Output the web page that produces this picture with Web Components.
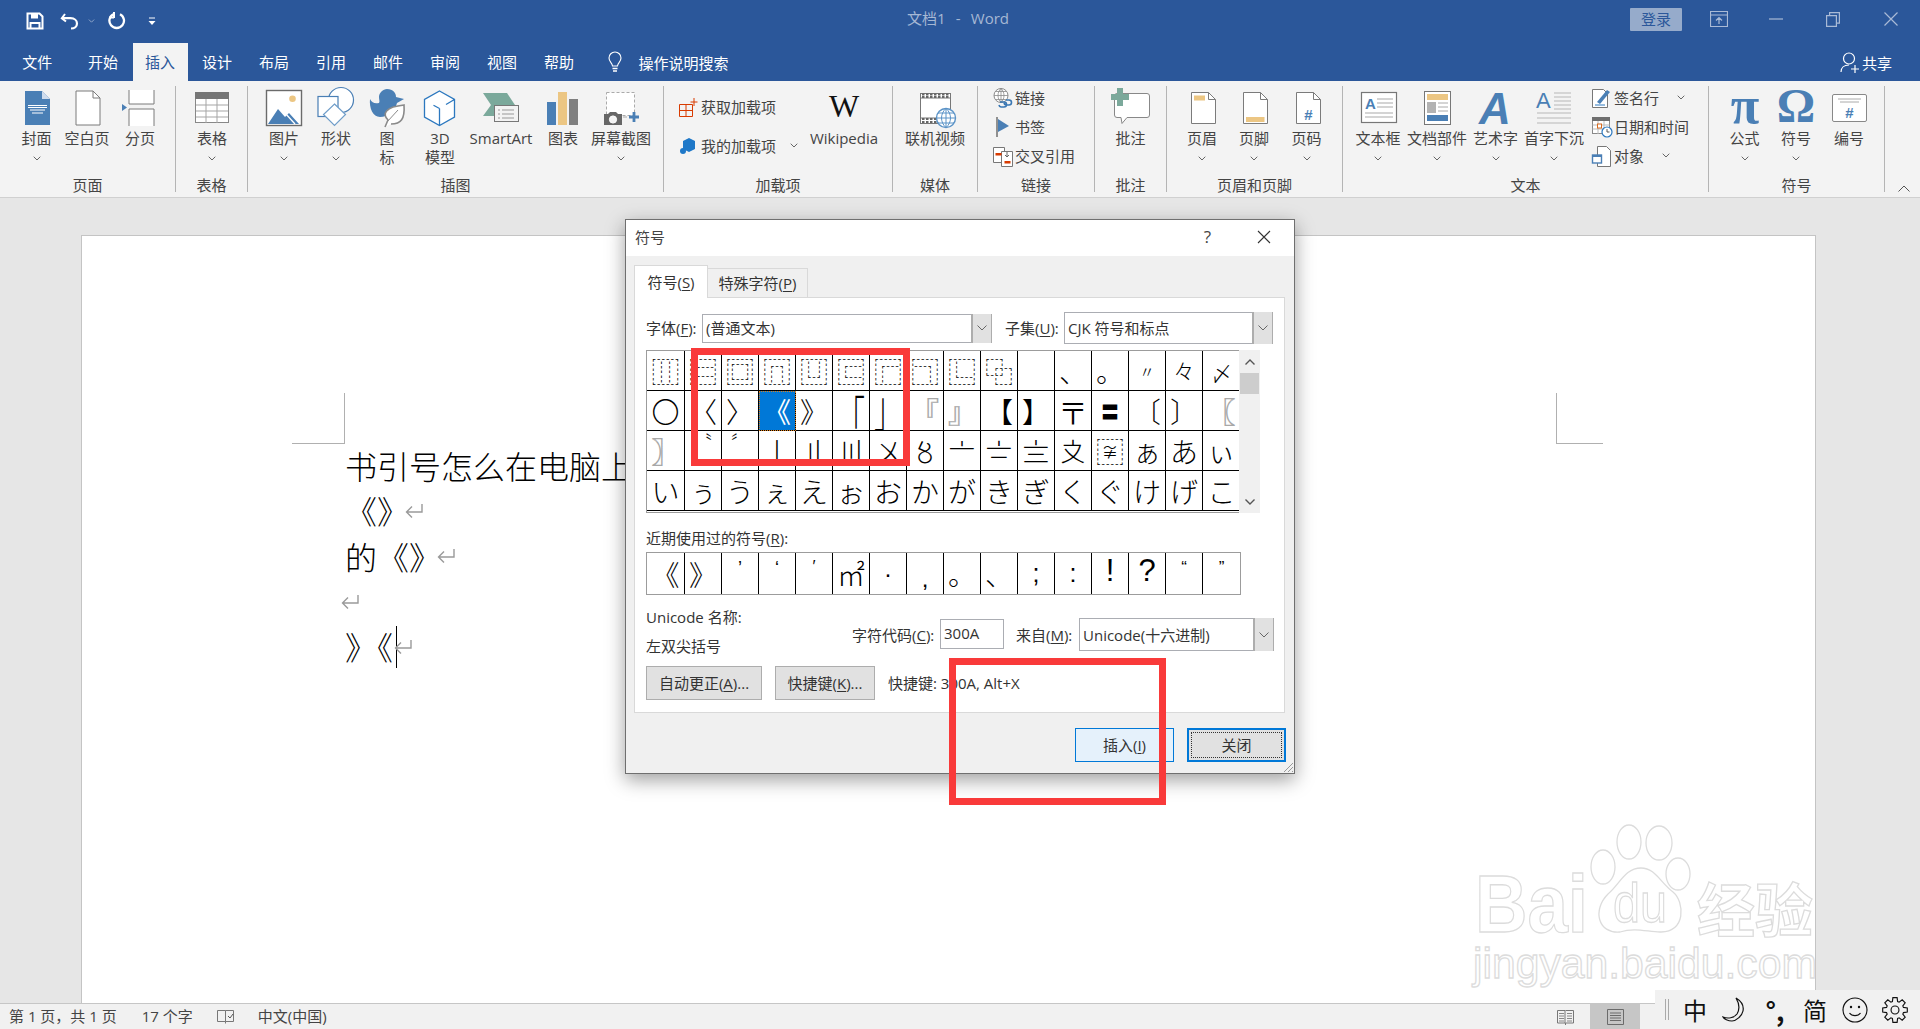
<!DOCTYPE html>
<html lang="zh"><head><meta charset="utf-8"><title>文档1 - Word</title>
<style>
html,body{margin:0;padding:0;height:100%;overflow:hidden;background:#e6e6e6}
body{font-family:"Open Sans","Noto Sans CJK SC",sans-serif;font-size:15px;color:#444}
</style></head>
<body>
<word-window>
  <title-bar></title-bar>
  <tab-bar>
    <tab-item style="width:74.500px">文件</tab-item><tab-item>开始</tab-item><tab-item active>插入</tab-item><tab-item>设计</tab-item><tab-item>布局</tab-item><tab-item>引用</tab-item><tab-item>邮件</tab-item><tab-item>审阅</tab-item><tab-item>视图</tab-item><tab-item>帮助</tab-item>
  </tab-bar>
  <ribbon-bar>
    <rb-group w="176" pad="11" label="页面">
      <rb-btn w="51" icon="cover" arrow>封面</rb-btn><rb-btn w="50" icon="blank">空白页</rb-btn><rb-btn w="56" icon="pbreak">分页</rb-btn>
    </rb-group>
    <rb-group w="72" pad="6" label="表格"><rb-btn w="60" icon="table" arrow>表格</rb-btn></rb-group>
    <rb-group w="416" pad="12" label="插图">
      <rb-btn w="48" icon="pic" arrow>图片</rb-btn><rb-btn w="56" icon="shape" arrow>形状</rb-btn><rb-btn w="46" icon="duck">图<br>标</rb-btn><rb-btn w="60" icon="cube">3D<br>模型</rb-btn><rb-btn w="62" icon="smart">SmartArt</rb-btn><rb-btn w="62" icon="chart">图表</rb-btn><rb-btn w="54" icon="shot" arrow>屏幕截图</rb-btn>
    </rb-group>
    <rb-group w="229" pad="15" label="加载项">
      <rb-col w="121" gap="10" top="7"><rb-small icon="getadd">获取加载项</rb-small><rb-small icon="myadd" arrow="14">我的加载项</rb-small></rb-col>
      <rb-btn w="88" icon="wiki">Wikipedia</rb-btn>
    </rb-group>
    <rb-group w="85" pad="0" label="媒体"><rb-btn w="84" icon="video">联机视频</rb-btn></rb-group>
    <rb-group w="117" pad="15" label="链接">
      <rb-col w="100" gap="0" top="-2"><rb-small icon="link">链接</rb-small><rb-small icon="mark">书签</rb-small><rb-small icon="xref">交叉引用</rb-small></rb-col>
    </rb-group>
    <rb-group w="72" pad="0" label="批注"><rb-btn w="71" icon="comment">批注</rb-btn></rb-group>
    <rb-group w="176" pad="9" label="页眉和页脚">
      <rb-btn w="52" icon="header" arrow>页眉</rb-btn><rb-btn w="52" icon="footer" arrow>页脚</rb-btn><rb-btn w="53" icon="pageno" arrow>页码</rb-btn>
    </rb-group>
    <rb-group w="366" pad="6" label="文本">
      <rb-btn w="58" icon="textbox" arrow>文本框</rb-btn><rb-btn w="60" icon="parts" arrow>文档部件</rb-btn><rb-btn w="57" icon="wordart" arrow>艺术字</rb-btn><rb-btn w="60" icon="dropcap" arrow>首字下沉</rb-btn>
      <rb-col w="116" gap="0" top="-2" left="8"><rb-small icon="sign" arrow="18">签名行</rb-small><rb-small icon="date">日期和时间</rb-small><rb-small icon="obj" arrow="18">对象</rb-small></rb-col>
    </rb-group>
    <rb-group w="176" pad="9" label="符号">
      <rb-btn w="53" icon="pi" arrow>公式</rb-btn><rb-btn w="50" icon="omega" arrow>符号</rb-btn><rb-btn w="56" icon="numb">编号</rb-btn>
    </rb-group>
    <rb-collapse></rb-collapse>
  </ribbon-bar>
  <doc-area>
    <doc-line>书引号怎么在电脑上</doc-line>
    <doc-line>《》<para-mark></para-mark></doc-line>
    <doc-line>的《》<para-mark></para-mark></doc-line>
    <doc-line><para-mark></para-mark></doc-line>
    <doc-line>》<tight-glyph>《</tight-glyph><text-caret></text-caret><para-mark></para-mark></doc-line>
  </doc-area>
  <status-bar></status-bar>
  <baidu-mark></baidu-mark>
  <symbol-dialog></symbol-dialog>
  <red-box style="left:691px;top:348px;width:205px;height:104px"></red-box>
  <red-box style="left:949px;top:658px;width:203px;height:133px"></red-box>
  <ime-bar></ime-bar>
</word-window>

<script>
const MUTE='#a9bad6';
const A='#4a7fb5',Y='#ecc683',G='#7f7f7f',S='#7b7b7b';
const ICONS={
cover:`<path d="M10 5h17l8 8v26H10z" fill="${A}"/><path d="M27 5l8 8h-8z" fill="#cfdced"/><path d="M13 19.5h19M13 21.5h19M15 24h15M17 27h11" stroke="#fff" stroke-width="1"/>`,
blank:`<path d="M11 5h17l7 7v27H11z" fill="#fff" stroke="${S}"/><path d="M28 5v7h7" fill="none" stroke="${S}"/>`,
pbreak:`<path d="M11 4v14h25V4M11 40V23h25v17" fill="#fff" stroke="${S}"/><path d="M4 18l5 3.500-5 3.500z" fill="${A}"/>`,
table:`<rect x="5.500" y="6.500" width="33" height="30" fill="#fff" stroke="#888"/><rect x="5" y="6" width="34" height="7" fill="#767676"/><path d="M6 19h32M6 25h32M6 31h32M16 13v24M27 13v24" stroke="#a5a5a5"/>`,
pic:`<rect x="4.500" y="4.500" width="35" height="35" fill="#fff" stroke="#6b6b6b" stroke-width="1.400"/><circle cx="30.500" cy="12.700" r="3.300" fill="${Y}"/><path d="M6 38l10-15 7 8 4-4 10 11z" fill="${A}"/><path d="M23 27l10 11" stroke="#fff" stroke-width="1.300"/>`,
shape:`<circle cx="27" cy="14" r="12.500" fill="#fff" stroke="${A}" stroke-width="1.200"/><rect x="4" y="10.500" width="20" height="20" fill="#fff" stroke="${A}" stroke-width="1.200"/><path d="M20.500 18l11 10.500-11 11-11-11z" fill="#fff" stroke="#6f9dc9" stroke-width="1.200"/>`,
duck:`<path d="M22 3c6 0 9 4 9 8l8 2-7 4c-2 8-9 14-17 14C8 31 4 22 5 13c2 4 5 5 9 4 1-2 0-3 0-6 0-4 4-8 8-8z" fill="${A}"/><path d="M20 41l3-7c-6-6-3-13 16-15 1 14-3 19-13 19" fill="#fff" stroke="#8a8a8a" stroke-width="1.600"/><path d="M22 36l11-12" stroke="#8a8a8a"/>`,
cube:`<path d="M21.500 5l15 8.500v17.500l-15 8.500-15-8.500V13.500zM21.500 22.500V39M21.500 22.500l-6-3.300M36 13.800l-8 4.700" fill="#fff" stroke="#2c78bf" stroke-width="1.300"/>`,
smart:`<path d="M4 7h24l8 12-8 11H4l8-11z" fill="#7ba99b"/><rect x="15.500" y="19.500" width="24" height="16" fill="#f3f3f3" stroke="#777"/><path d="M19 24h2M23 24h12M19 28h2M23 28h12M19 32h2M23 32h12" stroke="#999"/>`,
chart:`<rect x="6" y="16" width="9" height="23" fill="${A}"/><rect x="17" y="6" width="9" height="33" fill="${Y}"/><rect x="28" y="13" width="9" height="26" fill="${G}"/>`,
shot:`<rect x="7.500" y="6.500" width="28" height="23" fill="#fff" stroke="#aaa" stroke-dasharray="3 2"/><path d="M5 28h4l2-2h6l2 2h4v11H5z" fill="#666"/><circle cx="14" cy="33.500" r="3.600" fill="#f3f3f3" stroke="#fff"/><path d="M35 26v10M30 31h10" stroke="${A}" stroke-width="2.800"/><path d="M24 31h4" stroke="#aaa"/>`,
wiki:`<text x="22" y="31" text-anchor="middle" font-family="Liberation Serif" font-size="32" fill="#111">W</text>`,
video:`<rect x="7.500" y="7.500" width="30" height="30" fill="#fff" stroke="#777"/><path d="M8 12h29M8 32h29" stroke="#777"/><path d="M9 8.500h28M9 11h28M9 33h28M9 36h28" stroke="#666" stroke-width="2.200" stroke-dasharray="2.500 1.500"/><circle cx="33" cy="32" r="9.500" fill="#fff" stroke="#5b93c7" stroke-width="1.400"/><path d="M23.500 32h19M25 27h16M25 37h16M33 22.500v19M33 22.500c-6 5-6 14 0 19M33 22.500c6 5 6 14 0 19" fill="none" stroke="#5b93c7"/>`,
comment:`<path d="M8 7.500h30a2.500 2.500 0 0 1 2.500 2.500v19a2.500 2.500 0 0 1-2.500 2.500H18l-5 6-1-6H8A2.500 2.500 0 0 1 5.500 29V10A2.500 2.500 0 0 1 8 7.500z" fill="#fff" stroke="#888"/><path d="M2 8h6V2h6v6h6v6h-6v6H8v-6H2z" fill="#7ba99b"/>`,
header:`<path d="M11.500 6.500h17l7 7v24h-24z" fill="#fff" stroke="${S}"/><path d="M28.500 6.500v7h7" fill="none" stroke="${S}"/><rect x="14" y="9.500" width="11" height="5" fill="${Y}"/>`,
footer:`<path d="M11.500 6.500h17l7 7v24h-24z" fill="#fff" stroke="${S}"/><path d="M28.500 6.500v7h7" fill="none" stroke="${S}"/><rect x="14" y="31" width="18.500" height="5" fill="${Y}"/>`,
pageno:`<path d="M11.500 6.500h17l7 7v24h-24z" fill="#fff" stroke="${S}"/><path d="M28.500 6.500v7h7" fill="none" stroke="${S}"/><text x="23.500" y="34" text-anchor="middle" font-family="Liberation Sans" font-size="15" font-weight="700" fill="${A}">#</text>`,
textbox:`<rect x="5.500" y="6.500" width="35" height="30" fill="#fff" stroke="#777" stroke-width="1.200"/><text x="9" y="23" font-family="Liberation Sans" font-size="15" font-weight="700" fill="${A}">A</text><path d="M21 13h16M21 17h16M21 21h16M9 27h28M9 31h28" stroke="#aaa" stroke-width="1.200"/>`,
parts:`<rect x="9.500" y="5.500" width="26" height="33" fill="#fff" stroke="#777"/><rect x="12" y="8" width="21" height="6" fill="${Y}"/><rect x="12" y="16" width="9" height="11" fill="#b3b3b3"/><path d="M23 17h10M23 21h10M23 25h10" stroke="#aaa"/><rect x="12" y="29" width="21" height="6" fill="${A}"/>`,
wordart:`<text x="21" y="38" text-anchor="middle" font-family="Liberation Sans" font-style="italic" font-weight="700" font-size="44" fill="${A}">A</text>`,
dropcap:`<text x="4" y="22" font-family="Liberation Sans" font-size="22" font-weight="400" fill="${A}">A</text><path d="M22 7h17M22 11h17M22 15h17M22 19h17M22 23h17M5 27h34M5 32h34M5 37h34" stroke="#b8b8b8" stroke-width="1.200"/>`,
pi:`<text x="22" y="37" text-anchor="middle" font-family="Liberation Serif" font-size="52" font-weight="700" fill="${A}">π</text>`,
omega:`<text x="22" y="36" text-anchor="middle" font-family="Liberation Serif" font-size="48" font-weight="700" fill="${A}">Ω</text>`,
numb:`<rect x="5.500" y="8.500" width="34" height="27" rx="1.500" fill="#fff" stroke="#888"/><path d="M11 13h23M13 16h19" stroke="#aaa"/><text x="22.500" y="32" text-anchor="middle" font-family="Liberation Sans" font-size="15" font-weight="700" fill="${A}">#</text>`,
getadd:`<path d="M.5 7.500h13v12H.5zM.5 13.500h13M7 7.500v12" fill="none" stroke="#d83b01"/><path d="M15 1v8M11.500 5h7" stroke="#d83b01"/>`,
myadd:`<path d="M10 2l6 3v8l-6 3-6-3V5z" fill="#1e78c8"/><circle cx="4" cy="15" r="3" fill="#1e78c8"/>`,
link:`<circle cx="8" cy="7.500" r="7" fill="#fff" stroke="#8a8a8a"/><path d="M1 7.500h14M8 .500v14M2.500 3.500h11M2.500 11.500h11M8 .500c-4 4-4 10 0 14M8 .500c4 4 4 10 0 14" fill="none" stroke="#8a8a8a" stroke-width=".8"/><path d="M7 14h4a2.500 2.500 0 0 1 0 5H8a2.500 2.500 0 0 1-2-2M13 12h3a2.500 2.500 0 0 1 0 5h-3a2.500 2.500 0 0 1-2-2" fill="none" stroke="#3b78b4" stroke-width="1.600"/>`,
mark:`<path d="M4 0v20" stroke="#777" stroke-width="1.600"/><path d="M5 2l11 7-11 6z" fill="${A}"/>`,
xref:`<path d="M.5 1.500h11v15H.5z" fill="#fff" stroke="#777"/><path d="M8.500 5.500h11v15h-11z" fill="#fff" stroke="#777"/><rect x="2.500" y="7" width="6" height="2.500" fill="#d83b01"/><rect x="11.500" y="15" width="6" height="2.500" fill="#d83b01"/><path d="M14 6v5M12 9l2 2 2-2" fill="none" stroke="#666"/>`,
sign:`<path d="M.5 1.500h11l4 4v14H.5z" fill="#fff" stroke="#777"/><path d="M3 17h10" stroke="#2c78bf"/><path d="M5 14L15 2l3 2-10 12z" fill="${A}"/>`,
date:`<rect x=".5" y=".5" width="17" height="16" fill="#fff" stroke="#888"/><rect x="0" y="0" width="18" height="4" fill="#6e6e6e"/><path d="M.5 8h17M.5 12h17M6 4v13M12 4v13" stroke="#bbb"/><rect x="5.500" y="7" width="4" height="4" fill="#fff" stroke="#d86a1e"/><circle cx="15" cy="15" r="5" fill="#fff" stroke="#2c78bf" stroke-width="1.200"/><path d="M15 12v3h2.500" fill="none" stroke="#555"/>`,
obj:`<path d="M5.500 .5h9l4 4v16h-13z" fill="#fff" stroke="#777"/><rect x=".5" y="9" width="9" height="8" fill="#fff" stroke="${A}" stroke-width="1.400"/><rect x=".5" y="9" width="9" height="2" fill="${A}"/>`
};
const svg44=n=>`<svg viewBox="0 0 44 44" width="44" height="44">${ICONS[n]||''}</svg>`;
const chev=(c='#666')=>`<svg viewBox="0 0 8 5" width="8" height="5"><path d="M.7 .7L4 4l3.300-3.300" fill="none" stroke="${c}" stroke-width="1"/></svg>`;
const PMARK=`<svg viewBox="0 0 18 16" width="18" height="16"><path d="M17 1v8H2M7 3.500L1.500 9 7 14.500" fill="none" stroke="#9a9a9a" stroke-width="1.400"/></svg>`;

function comp(name,css,render){
  customElements.define(name,class extends HTMLElement{
    connectedCallback(){
      if(this.shadowRoot)return;
      const r=this.attachShadow({mode:'open'});
      r.innerHTML=`<style>${css}</style>`+render(this);
    }
  });
}

comp('word-window',`:host{display:flex;flex-direction:column;position:relative;width:1920px;height:1029px;overflow:hidden}`,()=>`<slot></slot>`);

comp('title-bar',`:host{display:grid;grid-template-columns:1fr auto 1fr;align-items:center;height:41px;background:#2b579a;flex:none}
.q{display:flex;align-items:center;padding-left:26px;height:41px}
.t{color:#a6b8d4;font-size:15px;padding-bottom:7px;padding-right:4px;white-space:pre;word-spacing:1.200px}
.r{display:flex;align-items:center;justify-content:flex-end;height:41px;padding-bottom:3px;box-sizing:border-box}
.login{width:52px;height:23px;background:#96abcb;color:#2b579a;font-size:15px;line-height:23px;text-align:center;border-radius:1px;margin-right:28px}
.r svg{display:block}`,()=>`
<div class="q">
 <svg viewBox="0 0 18 18" width="18" height="18"><path d="M1.500 1.500h12l3 3v12h-15z" fill="none" stroke="#fff" stroke-width="2"/><path d="M5 1.500h7v5H5z" fill="#fff"/><path d="M4.500 16v-5h9v5" fill="none" stroke="#fff" stroke-width="2"/></svg>
 <svg style="margin-left:16px" viewBox="0 0 20 18" width="20" height="18"><path d="M5 2L1.800 6.200 6 9.500" fill="none" stroke="#fff" stroke-width="2"/><path d="M2.500 6.200h8c4 0 6.500 2.300 6.500 5.300s-2.500 5-6 5" fill="none" stroke="#fff" stroke-width="2.200"/></svg>
 <span style="margin-left:8px;display:flex">${chev('#a6b8d4').replace('width="8" height="5"','width="7" height="4"')}</span>
 <svg style="margin-left:13px" viewBox="0 0 18 19" width="18" height="19"><path d="M12 3.200a7.300 7.300 0 1 1-6.600 0" fill="none" stroke="#fff" stroke-width="2.300"/><path d="M6 1v6M6 6.500h-5" fill="none" stroke="#fff" stroke-width="2"/></svg>
 <svg style="margin-left:22px" viewBox="0 0 8 10" width="8" height="10"><path d="M1 2h6" stroke="#fff"/><path d="M.5 5h7L4 9z" fill="#fff"/></svg>
</div>
<div class="t">文档1  -  Word</div>
<div class="r">
 <div class="login">登录</div>
 <svg viewBox="0 0 18 16" width="18" height="16"><path d="M.5 .5h17v15H.5zM.5 4h17M9 13V7M6 9.500l3-3 3 3" fill="none" stroke="${MUTE}" stroke-width="1.200"/></svg>
 <svg style="margin-left:41px" viewBox="0 0 14 2" width="14" height="2"><path d="M0 1h14" stroke="${MUTE}" stroke-width="1.200"/></svg>
 <svg style="margin-left:43px" viewBox="0 0 14 15" width="14" height="15"><path d="M.6 3.600h9.800v10.800H.6zM3.600 3.500V.6h9.800v10.500h-3" fill="none" stroke="${MUTE}" stroke-width="1.200"/></svg>
 <svg style="margin-left:44px;margin-right:22px" viewBox="0 0 14 14" width="14" height="14"><path d="M.5 .5l13 13M13.500 .5l-13 13" stroke="${MUTE}" stroke-width="1.200"/></svg>
</div>`);

comp('tab-bar',`:host{display:flex;align-items:flex-end;height:40px;background:#2b579a;flex:none;color:#fff}
.s{display:flex;align-items:center;height:38px;margin-left:19px;font-size:15px;color:#fff}
.s svg{margin-right:16px}
.share{display:flex;align-items:center;height:38px;margin-left:auto;padding-right:28px;font-size:15px;gap:2px}`,()=>`
<slot></slot>
<div class="s"><svg viewBox="0 0 16 22" width="16" height="22"><path d="M5.500 15c0-3-3.500-4-3.500-8a6 6 0 0 1 12 0c0 4-3.500 5-3.500 8z" fill="none" stroke="#fff" stroke-width="1.100"/><path d="M5.500 17.500h5M6 20h4" stroke="#fff" stroke-width="1.300"/></svg>操作说明搜索</div>
<div class="share"><svg viewBox="0 0 20 22" width="20" height="22"><circle cx="9" cy="7.500" r="5.500" fill="none" stroke="#fff" stroke-width="1.200"/><path d="M1 21c0-4 3-7 8-7M11 18h8M15 14v8" fill="none" stroke="#fff" stroke-width="1.200"/></svg>共享</div>`);

comp('tab-item',`:host{display:block;width:57px;height:38px;line-height:38px;text-align:center;font-size:15px;color:#fff;box-sizing:border-box;flex:none}
:host([active]){background:#f3f3f3;color:#2b579a;width:55px;margin:0 1px}`,()=>`<slot></slot>`);

comp('ribbon-bar',`:host{display:flex;align-items:flex-start;height:117px;box-sizing:border-box;padding-top:5px;background:#f3f3f3;border-bottom:1px solid #d0d0d0;flex:none;position:relative}`,()=>`<slot></slot>`);

comp('rb-group',`:host{display:flex;flex-direction:column;height:106px;box-sizing:border-box;border-right:1px solid #b4b4b4;flex:none}
.c{display:flex;height:89px;align-items:flex-start}
.l{text-align:center;font-size:15px;line-height:20px;height:17px;color:#444}`,h=>{
  h.style.width=h.getAttribute('w')+'px';
  return `<div class="c" style="padding-left:${h.getAttribute('pad')}px"><slot></slot></div><div class="l">${h.getAttribute('label')}</div>`;
});

comp('rb-btn',`:host{display:flex;flex-direction:column;align-items:center;flex:none;font-size:15px;line-height:19px;color:#444;text-align:center;white-space:nowrap}
.i{height:43px;width:44px;flex:none}
svg{display:block;overflow:visible}
.a{height:16px;margin-top:2px;display:flex;align-items:center;justify-content:center}`,h=>{
  h.style.width=h.getAttribute('w')+'px';
  return `<div class="i">${svg44(h.getAttribute('icon'))}</div><div><slot></slot></div>${h.hasAttribute('arrow')?`<div class="a">${chev()}</div>`:''}`;
});

comp('rb-col',`:host{display:flex;flex-direction:column;flex:none}`,h=>{
  h.style.width=h.getAttribute('w')+'px';
  h.style.gap=h.getAttribute('gap')+'px';
  h.style.marginTop=h.getAttribute('top')+'px';
  if(h.getAttribute('left'))h.style.marginLeft=h.getAttribute('left')+'px';
  return `<slot></slot>`;
});

comp('rb-small',`:host{display:flex;align-items:center;height:29px;font-size:15px;color:#444;white-space:nowrap;margin-top:-1px;margin-bottom:1px}
.i{width:20px;height:20px;flex:none;margin-right:2px}
svg{display:block;overflow:visible}
.a{display:flex;margin-left:var(--m)}`,h=>{
  const a=h.getAttribute('arrow');
  return `<div class="i"><svg viewBox="0 0 20 20" width="20" height="20">${ICONS[h.getAttribute('icon')]}</svg></div><slot></slot>${a?`<span class="a" style="--m:${a}px">${chev()}</span>`:''}`;
});

comp('rb-collapse',`:host{display:block;margin:99px 0 0 13px;width:12px;height:7px}svg{display:block}`,()=>`<svg viewBox="0 0 12 7" width="12" height="7"><path d="M.5 6.500L6 1l5.500 5.500" fill="none" stroke="#555"/></svg>`);

comp('doc-area',`:host{display:block;height:805px;background:#e6e6e6;padding:37px 0 0 81px;box-sizing:border-box;overflow:hidden;flex:none}
.p{width:1735px;height:800px;background:#fff;border:1px solid #c4c4c4;border-bottom:0;box-sizing:border-box;position:relative;padding:207px 0 0 263px;font-family:"Noto Sans CJK SC",sans-serif;font-weight:300;font-size:32px;line-height:45.300px;color:#000}
.m{position:absolute;height:50px;top:157px}
.tl{left:210px;width:52px;border-right:1px solid #b0b0b0;border-bottom:1px solid #b0b0b0}
.tr{left:1474px;width:46px;border-left:1px solid #b0b0b0;border-bottom:1px solid #b0b0b0}`,()=>`<div class="p"><div class="m tl"></div><div class="m tr"></div><slot></slot></div>`);

comp('doc-line',`:host{display:flex;align-items:center;height:45.300px;white-space:nowrap}`,()=>`<slot></slot>`);
comp('para-mark',`:host{display:inline-flex;margin-left:-4px}svg{display:block}`,()=>PMARK);
comp('tight-glyph',`:host{display:inline-block;margin-left:-16px}`,()=>`<slot></slot>`);
comp('text-caret',`:host{display:inline-block;width:1px;height:42px;background:#000;margin-right:1px;margin-left:3px}`,()=>``);

comp('status-bar',`:host{display:flex;align-items:center;height:26px;background:#f1f1f1;border-top:1px solid #c6c6c6;box-sizing:border-box;font-size:15px;color:#444;flex:none;padding-left:9px;padding-bottom:2px;white-space:pre;font-family:"Open Sans","Noto Sans CJK SC",sans-serif}
.r{margin-left:auto;display:flex;margin-right:280px;margin-bottom:-2px}
.v{width:50px;height:25px;display:flex;align-items:center;justify-content:center}
.v.on{background:#c6c6c6}
svg{display:block}`,()=>`
<span>第 1 页，共 1 页</span><span style="margin-left:25px">17 个字</span>
<svg style="margin-left:24px" viewBox="0 0 18 16" width="18" height="16"><path d="M8.500 2.500H.5v11h8zM8.500 2.500h8v11h-8" fill="none" stroke="#777"/><path d="M11 8l2 2 3-4" fill="none" stroke="#555"/><path d="M8.500 13.500v2" stroke="#777"/></svg>
<span style="margin-left:23px">中文(中国)</span>
<div class="r">
 <div class="v"><svg viewBox="0 0 17 16" width="17" height="16"><path d="M.5 1.500h7.500v12.500H.5zM8.500 1.500h8v12.500h-8M8.500 14v2" fill="none" stroke="#777"/><path d="M2 4.500h5M2 7h5M2 9.500h5M2 12h5M10 4.500h5M10 7h5M10 9.500h5M10 12h5" stroke="#888"/></svg></div>
 <div class="v on"><svg viewBox="0 0 17 16" width="17" height="16"><path d="M.5 .5h16v15H.5z" fill="none" stroke="#6b6b6b"/><path d="M3 4h11M3 6.500h11M3 9h11M3 11.500h11" stroke="#6b6b6b"/></svg></div>
</div>`);

comp('baidu-mark',`:host{position:absolute;left:1470px;top:820px;width:350px;height:175px;display:block;pointer-events:none}
svg{display:block;overflow:visible}`,()=>`
<svg viewBox="0 0 350 175" width="350" height="175" fill="#fff" stroke="#dcdcdc" stroke-width="1.300">
<ellipse cx="133" cy="47" rx="12" ry="17"/><ellipse cx="159" cy="22" rx="12" ry="17"/><ellipse cx="189" cy="23" rx="13" ry="17"/><ellipse cx="208" cy="54" rx="12" ry="16"/>
<path d="M171 48C185 48 190 62 203 72C215 82 216 113 190 112C178 112 165 107 150 112C128 114 122 90 138 74C150 64 155 48 171 48Z"/>
<text x="5" y="112" font-family="Liberation Sans" font-weight="700" font-size="81" textLength="113" lengthAdjust="spacingAndGlyphs">Bai</text>
<text x="143" y="102" font-family="Liberation Sans" font-size="56" textLength="54" lengthAdjust="spacingAndGlyphs">du</text>
<text x="227" y="112" font-family="Noto Sans CJK SC" font-weight="700" font-size="58">经验</text>
<text x="3" y="158" font-family="Liberation Sans" font-size="43" textLength="344" lengthAdjust="spacingAndGlyphs">jingyan.baidu.com</text>
</svg>`);

comp('red-box',`:host{position:absolute;display:block;border:7px solid #f93a3a;box-sizing:content-box;pointer-events:none}`,()=>``);

comp('ime-bar',`:host{position:absolute;left:1655px;top:990px;width:265px;height:39px;background:#f1f1f1;display:flex;align-items:center;padding-left:10px;box-sizing:border-box;color:#111;font-size:24px;font-family:"Noto Sans CJK SC",sans-serif;line-height:28px}
.h{width:4px;height:21px;border-left:1px solid #aaa;border-right:1px solid #aaa;box-sizing:border-box;margin-right:6px}
.i{width:40px;display:flex;justify-content:center;align-items:center;height:34px;flex:none}
svg{display:block}`,()=>{
  let d='';const n=8,cx=12.5,cy=12.5;
  for(let k=0;k<n;k++){const a=k/n*Math.PI*2;const p=(t,r)=>`${(cx+r*Math.cos(a+t)).toFixed(2)} ${(cy+r*Math.sin(a+t)).toFixed(2)}`;
    d+=(k?'L':'M')+p(-.3,8.500)+'L'+p(-.17,12)+'L'+p(.17,12)+'L'+p(.3,8.500);}
  return `<div class="h"></div>
<div class="i">中</div>
<div class="i"><svg viewBox="0 0 26 26" width="26" height="26"><path d="M14 1c5 3 8 8 7 13s-7 10-11 10-8-2-9-4c5 2 11 1 14-3 3-5 2-11-1-16z" fill="none" stroke="#111" stroke-width="1.200"/></svg></div>
<div class="i" style="font-weight:700;font-size:26px;line-height:24px">°<span style="font-size:26px">,</span></div>
<div class="i">简</div>
<div class="i"><svg viewBox="0 0 26 26" width="26" height="26"><circle cx="13" cy="13" r="12" fill="none" stroke="#111" stroke-width="1.200"/><circle cx="9" cy="10" r="1.200" fill="#111"/><circle cx="17" cy="10" r="1.200" fill="#111"/><path d="M7.500 16c2.500 3.500 8.500 3.500 11 0" fill="none" stroke="#111" stroke-width="1.200"/></svg></div>
<div class="i"><svg viewBox="0 0 25 25" width="26" height="26"><path d="${d}Z" fill="none" stroke="#111" stroke-width="1.100"/><circle cx="12.500" cy="12.500" r="3.800" fill="none" stroke="#111" stroke-width="1.100"/></svg></div>`;
});

/* per-glyph adjustments: the reference's symbol font draws these at other sizes and heights */
const LAT='font-family:Liberation Sans;';
const GLYPH={
'〃':'font-size:16px','々':'font-size:21px','〆':'font-size:22px','〓':'font-size:18px','〒':'font-size:30px',
'「':'transform:scaleY(1.800) translateY(3px)','」':'transform:scaleY(1.800) translateY(-3px)',
'〝':'font-size:18px;transform:translateY(-10px)','〞':'font-size:18px;transform:translateY(-10px)',
'’':LAT+'font-size:18px;transform:translateY(-6px)','‘':LAT+'font-size:18px;transform:translateY(-6px)','′':LAT+'font-size:16px;transform:translateY(-7px)',
'“':LAT+'font-size:17px;transform:translateY(-6px)','”':LAT+'font-size:17px;transform:translateY(-6px)',
'·':LAT+'font-size:24px;','，':'',
',':LAT+'font-size:24px;transform:translateY(5px)',
';':LAT+'font-size:25px','：':'',':':LAT+'font-size:25px',
'!':LAT+'font-size:31px;transform:translateY(-3px)','?':LAT+'font-size:31px;transform:translateY(-3px)'
};
comp('sym-grid',`:host{display:grid;grid-template-columns:38px repeat(15,37px);grid-auto-rows:min-content;align-content:start;border:1px solid #9c9c9c;border-right:0;box-sizing:border-box;font-family:"Noto Sans CJK SC",sans-serif;color:#000;flex:none}
:host([flat]){border-right:1px solid #9c9c9c}
.c{display:flex;align-items:center;justify-content:center;border-right:1px solid #000;border-bottom:1px solid #000;box-sizing:border-box;overflow:hidden;font-size:28px;line-height:1;font-weight:300}
.c span{display:inline-block}
.c.last{border-right:0}
.c.nb{border-bottom:0}
.h{color:#fff;-webkit-text-stroke:.7px #a8a8a8}
.sel{background:#0078d7;color:#fff;font-weight:400;outline:1px dotted #e0801a;outline-offset:-1px}`,h=>{
  const rows=h.getAttribute('rows').split('|');
  const hollow='『』〖〗';
  const H=+h.getAttribute('rh');
  let out='';
  rows.forEach(r=>{
    [...r].forEach((ch,i)=>{
      const cl=['c'];
      if(hollow.includes(ch))cl.push('h');
      if(ch==='《'&&h.hasAttribute('sel'))cl.push('sel');
      if(h.hasAttribute('flat'))cl.push('nb');
      if(i===15)cl.push('last');
      out+=`<div class="${cl.join(' ')}" style="height:${H}px"><span style="${GLYPH[ch]||''}">${ch}</span></div>`;
    });
  });
  return out;
});

comp('drop-box',`:host{display:flex;box-sizing:border-box;border:1px solid #abadb3;background:#fff;font-size:15px;color:#333;flex:none;align-items:center;padding-left:3px;position:relative}
.t{flex:1;white-space:nowrap;overflow:hidden}
.b{width:21px;align-self:stretch;background:#e1e1e1;border-left:2px solid #adadad;border-right:1px solid #adadad;display:flex;align-items:center;justify-content:center;box-sizing:border-box;margin:-1px -1px -1px 0}`,h=>{
  h.style.width=h.getAttribute('w')+'px';h.style.height=h.getAttribute('h')+'px';
  return `<div class="t"><slot></slot></div><div class="b"><svg viewBox="0 0 10 6" width="10" height="6"><path d="M.5 .5L5 5l4.500-4.500" fill="none" stroke="#666"/></svg></div>`;
});

comp('dlg-btn',`:host{display:flex;align-items:center;justify-content:center;box-sizing:border-box;height:34px;background:#e1e1e1;border:1px solid #adadad;font-size:15px;color:#333;flex:none;white-space:nowrap}
:host([hot]){background:#e5f1fb;border-color:#0078d7}
:host([def]){border:2px solid #0078d7}
.d{display:flex;align-items:center;justify-content:center;width:100%;height:100%;box-sizing:border-box}
:host([def]) .d{border:1px dotted #333;margin:2px;width:calc(100% - 4px);height:calc(100% - 4px)}`,h=>{
  h.style.width=h.getAttribute('w')+'px';
  return `<div class="d"><slot></slot></div>`;
});

comp('symbol-dialog',`:host{position:absolute;left:625px;top:219px;width:670px;height:555px;box-sizing:border-box;border:1px solid #6f6f6f;background:#f0f0f0;box-shadow:0 6px 18px rgba(0,0,0,.38);display:block;font-size:15px;color:#333;line-height:20px;font-family:"Open Sans","Noto Sans CJK SC",sans-serif}
u{text-decoration:underline;text-underline-offset:2px}
.tb{height:36px;background:#fff;display:flex;align-items:center;padding:0 0 3px 9px;box-sizing:border-box;color:#444}
.tb .sp{flex:1}
.q{margin-right:46px;font-size:17px}
.x{margin-right:23px;display:block}
.tabs{display:flex;padding:10px 0 0 8px;height:32px;align-items:flex-end;box-sizing:content-box;margin-bottom:-1px;position:relative;z-index:1}
.tab{display:flex;align-items:center;justify-content:center;box-sizing:border-box;border:1px solid #d9d9d9;border-bottom:0}
.tab.on{width:74px;height:33px;background:#fff}
.tab.off{width:100px;height:30px;border-left:0;background:#f0f0f0;border-bottom:1px solid #d9d9d9}
.panel{margin:0 9px 0 8px;height:416px;box-sizing:border-box;border:1px solid #d9d9d9;background:#fff;padding:14px 0 0 11px}
.row{display:flex;align-items:center}
.scroll{width:21px;height:163px;background:#f0f0f0;flex:none;display:flex;flex-direction:column;align-items:center;box-sizing:border-box}
.arr{height:23px;display:flex;align-items:center;justify-content:center;flex:none}
.th{width:19px;height:21px;background:#cdcdcd;flex:none}
.sp{flex:1}
.foot{display:flex;justify-content:flex-end;gap:13px;padding:15px 8px 0 0;position:relative}
.grip{position:absolute;right:0;bottom:0;width:12px;height:12px;display:block}`,()=>`
<div class="tb"><span>符号</span><span class="sp"></span><span class="q">?</span>
 <svg class="x" viewBox="0 0 14 14" width="14" height="14"><path d="M1 1l12 12M13 1L1 13" stroke="#333" stroke-width="1.100"/></svg></div>
<div class="tabs"><div class="tab on"><span>符号(<u>S</u>)</span></div><div class="tab off"><span>特殊字符(<u>P</u>)</span></div></div>
<div class="panel">
 <div class="row" style="height:32px">
  <span style="width:56px">字体(<u>F</u>):</span>
  <drop-box w="290" h="29">(普通文本)</drop-box>
  <span style="margin-left:13px;width:59px">子集(<u>U</u>):</span>
  <drop-box w="209" h="32">CJK 符号和标点</drop-box>
 </div>
 <div class="row" style="margin-top:6px;align-items:flex-start">
  <sym-grid sel rh="40" rows="⿲⿳⿴⿵⿶⿷⿸⿹⿺⿻　、。〃々〆|〇〈〉《》「」『』【】〒〓〔〕〖|〗〝〞〡〢〣〤〥〦〧〨〩〾ぁあぃ|いぅうぇえぉおかがきぎくぐけげこ" style="width:593px;height:163px"></sym-grid>
  <div class="scroll">
   <div class="arr"><svg viewBox="0 0 10 6" width="10" height="6"><path d="M.5 5.500L5 1l4.500 4.500" fill="none" stroke="#555" stroke-width="1.400"/></svg></div>
   <div class="th"></div><div class="sp"></div>
   <div class="arr"><svg viewBox="0 0 10 6" width="10" height="6"><path d="M.5 .5L5 5l4.500-4.500" fill="none" stroke="#555" stroke-width="1.400"/></svg></div>
  </div>
 </div>
 <div style="margin-top:15px;height:20px">近期使用过的符号(<u>R</u>):</div>
 <sym-grid flat rh="41" rows="《》’‘′㎡·,。、;:!?“”" style="margin-top:4px;width:595px;height:43px"></sym-grid>
 <div class="row" style="align-items:flex-start;margin-top:8px;height:58px">
  <div style="width:206px;line-height:29px">Unicode 名称:<br>左双尖括号</div>
  <div class="row" style="margin-top:15px;height:33px">
   <span style="width:88px">字符代码(<u>C</u>):</span>
   <div style="width:64px;height:30px;box-sizing:border-box;border:1px solid #abadb3;padding-left:3px;line-height:26px;color:#333;margin-top:-2px">300A</div>
   <span style="margin-left:12px;width:63px">来自(<u>M</u>):</span>
   <drop-box w="195" h="33">Unicode(十六进制)</drop-box>
  </div>
 </div>
 <div class="row" style="margin-top:5px;height:34px">
  <dlg-btn w="116"><span>自动更正(<u>A</u>)...</span></dlg-btn>
  <dlg-btn w="100" style="margin-left:13px"><span>快捷键(<u>K</u>)...</span></dlg-btn>
  <span style="margin-left:13px">快捷键: 300A, Alt+X</span>
 </div>
</div>
<div class="foot">
 <dlg-btn hot w="99"><span>插入(<u>I</u>)</span></dlg-btn>
 <dlg-btn def w="99">关闭</dlg-btn>
</div>
<svg class="grip" viewBox="0 0 12 12" width="12" height="12"><path d="M11 2L2 11M11 6l-5 5M11 10l-1 1" stroke="#999"/></svg>`);
</script>
</body></html>
